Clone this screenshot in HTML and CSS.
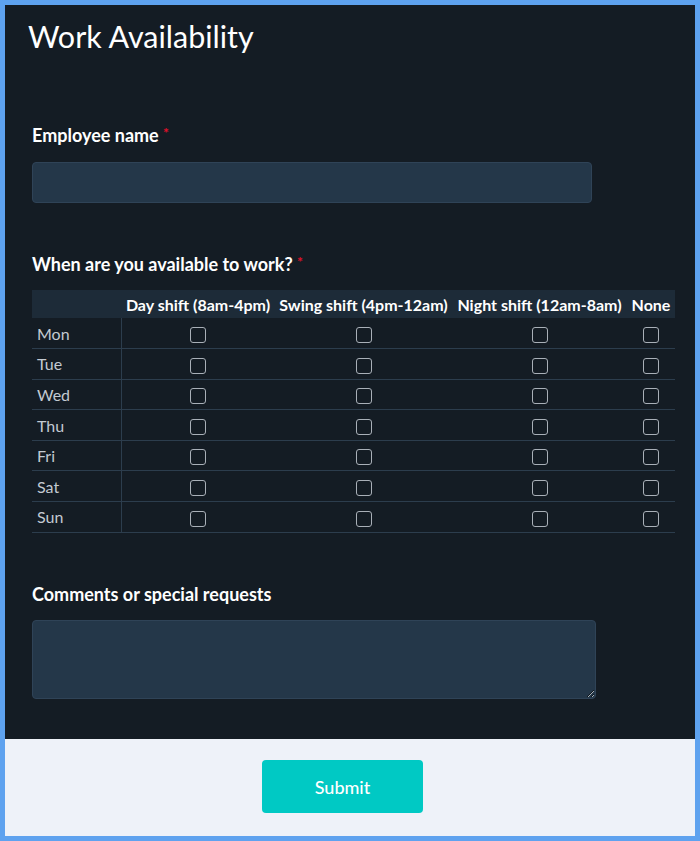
FILE: index.html
```html
<!DOCTYPE html>
<html lang="en">
<head>
<meta charset="utf-8">
<title>Work Availability</title>
<link rel="stylesheet" href="styles.css">
</head>
<body>
<div class="frame">
  <form class="panel">
    <h1 class="title">Work Availability</h1>
    <div class="field field-name">
      <label class="label" for="emp">Employee name <span class="req">*</span></label>
      <input class="text-input" id="emp" type="text">
    </div>
    <div class="field field-grid">
      <div class="label">When are you available to work? <span class="req">*</span></div>
      <table class="grid">
        <thead>
          <tr>
            <th class="c-day"></th>
            <th class="c-a">Day shift (8am-4pm)</th>
            <th class="c-b">Swing shift (4pm-12am)</th>
            <th class="c-c">Night shift (12am-8am)</th>
            <th class="c-d">None</th>
          </tr>
        </thead>
        <tbody>
          <tr><td class="day">Mon</td><td><span class="box"></span></td><td><span class="box"></span></td><td><span class="box"></span></td><td><span class="box"></span></td></tr>
          <tr><td class="day">Tue</td><td><span class="box"></span></td><td><span class="box"></span></td><td><span class="box"></span></td><td><span class="box"></span></td></tr>
          <tr><td class="day">Wed</td><td><span class="box"></span></td><td><span class="box"></span></td><td><span class="box"></span></td><td><span class="box"></span></td></tr>
          <tr><td class="day">Thu</td><td><span class="box"></span></td><td><span class="box"></span></td><td><span class="box"></span></td><td><span class="box"></span></td></tr>
          <tr><td class="day">Fri</td><td><span class="box"></span></td><td><span class="box"></span></td><td><span class="box"></span></td><td><span class="box"></span></td></tr>
          <tr><td class="day">Sat</td><td><span class="box"></span></td><td><span class="box"></span></td><td><span class="box"></span></td><td><span class="box"></span></td></tr>
          <tr><td class="day">Sun</td><td><span class="box"></span></td><td><span class="box"></span></td><td><span class="box"></span></td><td><span class="box"></span></td></tr>
        </tbody>
      </table>
    </div>
    <div class="field field-comments">
      <label class="label" for="cm">Comments or special requests</label>
      <textarea class="text-area" id="cm"></textarea>
    </div>
  </form>
  <div class="footer">
    <button class="submit" type="button">Submit</button>
  </div>
</div>
</body>
</html>
```
FILE: styles.css
```css
* { box-sizing: border-box; }
html, body { margin: 0; padding: 0; }
body {
  font-family: Lato, "Open Sans", sans-serif;
  background: #5ea2ef;
}
.frame {
  width: 700px;
  height: 841px;
  border: 5px solid #5ea2ef;
  display: flex;
  flex-direction: column;
  background: #141c24;
}
.panel {
  flex: 1;
  background: #141c24;
  padding: 0 0 0 27px;
  margin: 0;
}
.title {
  margin: 0 0 0 -4px;
  padding-top: 13px;
  font-size: 30.5px;
  font-weight: 400;
  line-height: 36px;
  color: #ffffff;
}
.field { display: flex; flex-direction: column; align-items: flex-start; }
.field-name { margin-top: 70px; }
.field-grid { margin-top: 50px; }
.field-comments { margin-top: 50px; }
.label {
  font-size: 18px;
  font-weight: 700;
  color: #ffffff;
  line-height: 22px;
}
.req { color: #e0102a; font-size: 14px; vertical-align: 4px; line-height: 0; }
.text-input {
  margin-top: 16px;
  width: 560px;
  height: 41px;
  background: #243749;
  border: 1px solid #2f4357;
  border-radius: 4px;
  outline: none;
}
.text-area {
  margin-top: 15px;
  width: 564px;
  height: 79px;
  background: #243749;
  border: 1px solid #2f4357;
  border-radius: 4px;
  outline: none;
  resize: both;
  display: block;
}
.grid {
  margin-top: 15px;
  width: 643px;
  border-collapse: collapse;
  table-layout: fixed;
}
.grid th {
  background: #1d2b38;
  color: #ffffff;
  font-size: 16px;
  font-weight: 700;
  height: 28px;
  padding: 0;
  text-align: center;
  white-space: nowrap;
}
.c-day { width: 89px; }
.c-a { width: 154px; }
.c-b { width: 177px; }
.c-c { width: 175px; }
.c-d { width: 48px; }
.grid td {
  height: 30.6px;
  padding: 0;
  text-align: center;
  border-bottom: 1px solid #2c3d4d;
  vertical-align: middle;
}
.grid td.day {
  text-align: left;
  padding-left: 5px;
  color: #c3cad2;
  font-size: 16px;
  border-right: 1px solid #2c3d4d;
}
.box {
  display: inline-block;
  width: 16px;
  height: 16px;
  border: 1.5px solid #a9b0b8;
  border-radius: 3px;
  vertical-align: middle;
  margin-top: -1px;
}
.footer {
  height: 97px;
  background: #eef2f9;
  display: flex;
  justify-content: center;
  align-items: flex-start;
  padding-top: 21px;
  padding-right: 15px;
}
.submit {
  width: 161px;
  height: 53px;
  background: #00c9c4;
  border: none;
  border-radius: 4px;
  color: #ffffff;
  font-family: Lato, sans-serif;
  font-size: 18px;
  font-weight: 500;
}
```
